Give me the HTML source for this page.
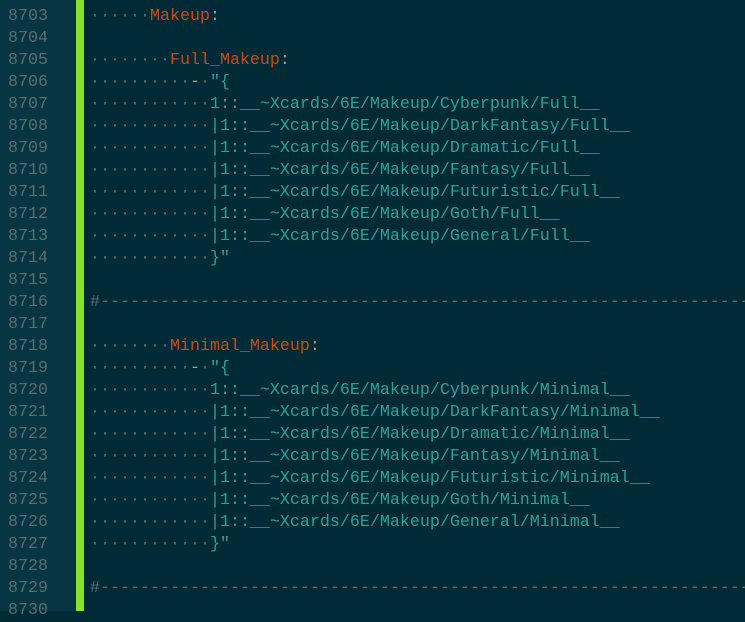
<!DOCTYPE html>
<html><head><meta charset="utf-8"><style>
html,body{margin:0;padding:0;width:745px;height:611px;overflow:hidden;background:#002b36;}
.g{position:absolute;left:0;top:0;width:76px;height:611px;background:#073642;}
.bar{position:absolute;left:76px;top:0;width:8px;height:611px;background:#85e22e;}
.ln{position:absolute;left:8px;top:6px;font:16.67px/22px "Liberation Mono",monospace;color:#586e75;white-space:pre;}
.code{position:absolute;left:90px;top:6px;width:655px;overflow:hidden;font:16.67px/22px "Liberation Mono",monospace;color:#2aa198;white-space:pre;}
.d{color:#4f6a72;}
.o{color:#cb4b16;}
.p{color:#93a1a1;}
.s{color:#586e75;}
</style></head><body>
<div class="g"></div><div class="bar"></div>
<div class="ln">8703
8704
8705
8706
8707
8708
8709
8710
8711
8712
8713
8714
8715
8716
8717
8718
8719
8720
8721
8722
8723
8724
8725
8726
8727
8728
8729
8730</div>
<div class="code"><span class="d">······</span><span class="o">Makeup</span><span class="p">:</span>

<span class="d">········</span><span class="o">Full_Makeup</span><span class="p">:</span>
<span class="d">··········</span><span class="p">-</span><span class="d">·</span>"{
<span class="d">············</span>1::__~Xcards/6E/Makeup/Cyberpunk/Full__
<span class="d">············</span>|1::__~Xcards/6E/Makeup/DarkFantasy/Full__
<span class="d">············</span>|1::__~Xcards/6E/Makeup/Dramatic/Full__
<span class="d">············</span>|1::__~Xcards/6E/Makeup/Fantasy/Full__
<span class="d">············</span>|1::__~Xcards/6E/Makeup/Futuristic/Full__
<span class="d">············</span>|1::__~Xcards/6E/Makeup/Goth/Full__
<span class="d">············</span>|1::__~Xcards/6E/Makeup/General/Full__
<span class="d">············</span>}"

<span class="s">#-----------------------------------------------------------------------</span>

<span class="d">········</span><span class="o">Minimal_Makeup</span><span class="p">:</span>
<span class="d">··········</span><span class="p">-</span><span class="d">·</span>"{
<span class="d">············</span>1::__~Xcards/6E/Makeup/Cyberpunk/Minimal__
<span class="d">············</span>|1::__~Xcards/6E/Makeup/DarkFantasy/Minimal__
<span class="d">············</span>|1::__~Xcards/6E/Makeup/Dramatic/Minimal__
<span class="d">············</span>|1::__~Xcards/6E/Makeup/Fantasy/Minimal__
<span class="d">············</span>|1::__~Xcards/6E/Makeup/Futuristic/Minimal__
<span class="d">············</span>|1::__~Xcards/6E/Makeup/Goth/Minimal__
<span class="d">············</span>|1::__~Xcards/6E/Makeup/General/Minimal__
<span class="d">············</span>}"

<span class="s">#-----------------------------------------------------------------------</span>
</div>
</body></html>
